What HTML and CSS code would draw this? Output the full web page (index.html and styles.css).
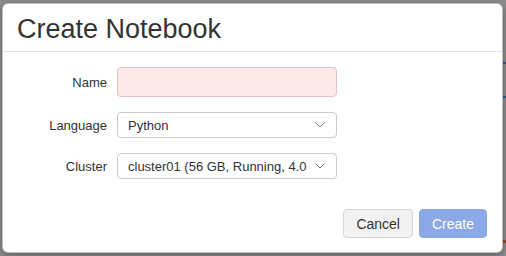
FILE: index.html
```html
<!DOCTYPE html>
<html lang="en">
<head>
  <meta charset="UTF-8">
  <title>Create Notebook</title>
  <link rel="stylesheet" href="styles.css">
</head>
<body>
  <div class="backdrop">
    <span class="mark mark-blue m1"></span>
    <span class="mark mark-blue m2"></span>
    <span class="mark mark-red m3"></span>
  </div>
  <div class="modal">
    <div class="modal-header">
      <h3>Create Notebook</h3>
    </div>
    <div class="modal-body">
      <label class="lbl">Name</label>
      <div class="input input-error"></div>

      <label class="lbl">Language</label>
      <div class="select">
        <span class="select-text">Python</span>
        <svg class="chevron" width="10" height="6" viewBox="0 0 10 6"><path d="M0.5 0.5 L5 5 L9.5 0.5" fill="none" stroke="#777" stroke-width="1"/></svg>
      </div>

      <label class="lbl">Cluster</label>
      <div class="select">
        <span class="select-text">cluster01 (56 GB, Running, 4.0</span>
        <svg class="chevron" width="10" height="6" viewBox="0 0 10 6"><path d="M0.5 0.5 L5 5 L9.5 0.5" fill="none" stroke="#777" stroke-width="1"/></svg>
      </div>
    </div>
    <div class="modal-footer">
      <button class="btn btn-default">Cancel</button>
      <button class="btn btn-primary" disabled>Create</button>
    </div>
  </div>
</body>
</html>
```

FILE: styles.css
```css
body {
  margin: 0;
  background-color: #8c8c8c;
  font-family: "Liberation Sans", Arial, sans-serif;
  color: #333;
  width: 506px;
  height: 256px;
  overflow: hidden;
}
.backdrop {
  position: absolute;
  left: 0;
  top: 0;
  width: 506px;
  height: 256px;
}
.mark {
  position: absolute;
  right: 0;
  width: 4px;
}
.mark-blue { background-color: #2a5d8f; height: 2px; }
.mark-red { background-color: #a0462e; height: 3px; }
.m1 { top: 62px; }
.m2 { top: 96px; }
.m3 { top: 240px; }
.modal {
  position: relative;
  margin: 3px 0 0 2px;
  width: 501px;
  height: 250px;
  box-sizing: border-box;
  background-color: #fff;
  border: 1px solid rgba(0,0,0,0.25);
  border-radius: 6px;
  box-shadow: 0 2px 6px rgba(0,0,0,0.35);
  display: flex;
  flex-direction: column;
}
.modal-header {
  height: 48px;
  box-sizing: border-box;
  padding: 0 14px;
  border-bottom: 1px solid #e5e5e5;
  display: flex;
  align-items: center;
}
.modal-header h3 {
  margin: 0;
  font-size: 27px;
  font-weight: normal;
  line-height: 1;
  margin-top: 4px;
}
.modal-body {
  display: grid;
  grid-template-columns: 89px 220px;
  grid-auto-rows: auto;
  column-gap: 10px;
  row-gap: 15px;
  align-items: center;
  padding: 15px 15px 0 15px;
}
.lbl {
  font-size: 13px;
  text-align: right;
}
.input {
  height: 30px;
  box-sizing: border-box;
  border: 1px solid #ccc;
  border-radius: 4px;
}
.input-error {
  background-color: #fde8e8;
  border-color: #e0c6c6;
}
.select {
  height: 26px;
  box-sizing: border-box;
  border: 1px solid #ccc;
  border-radius: 4px;
  display: flex;
  align-items: center;
  padding: 0 11px 0 10px;
  font-size: 13px;
  background-color: #fff;
}
.select-text {
  flex: 1;
  white-space: nowrap;
  margin-right: 8px;
}
.chevron {
  flex: none;
}
.modal-footer {
  margin-top: auto;
  display: flex;
  justify-content: flex-end;
  gap: 6px;
  padding: 0 15px 14px 0;
}
.btn {
  height: 29px;
  box-sizing: border-box;
  padding: 0 12px;
  font-family: "Liberation Sans", Arial, sans-serif;
  font-size: 14px;
  border-radius: 4px;
  border: 1px solid #ccc;
}
.btn-default {
  background-color: #f2f2f2;
  color: #333;
  border-color: #d5d5d5;
}
.btn-primary {
  background-color: #8aa9e6;
  border-color: #8aa9e6;
  color: #fff;
}
```
